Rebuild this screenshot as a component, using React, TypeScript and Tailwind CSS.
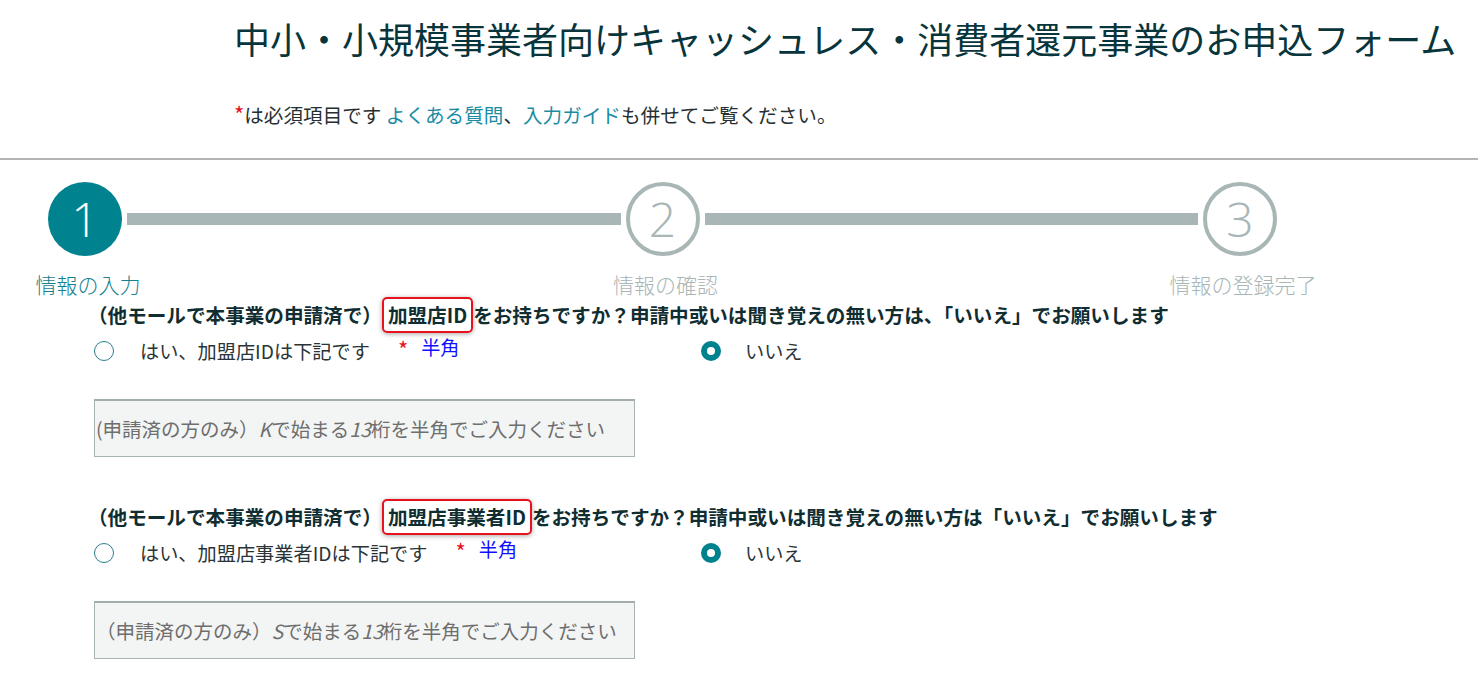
import React from "react";

function Step({ n, label, active }: { n: string; label: string; active?: boolean }) {
  return (
    <div className="flex w-[74px] shrink-0 flex-col items-center">
      <div
        className={
          active
            ? "flex h-[74px] w-[74px] items-center justify-center rounded-full bg-[#00828f] text-white"
            : "flex h-[74px] w-[74px] items-center justify-center rounded-full border-[4px] border-[#a9b6b6] bg-white text-[#a9b6b6]"
        }
      >
        <span className="font-['Open_Sans','Noto_Sans',sans-serif] text-[48px] font-light leading-none">{n}</span>
      </div>
      <div
        className={
          "mt-[16px] ml-[6px] whitespace-nowrap text-[21px] font-light leading-[24px] " +
          (active ? "text-[#13818f]" : "text-[#a9b6b6]")
        }
      >
        {label}
      </div>
    </div>
  );
}

function Bar() {
  return <div className="mx-[5px] mt-[31px] h-[12px] flex-1 bg-[#a8b6b6]" />;
}

function Radio({ checked }: { checked?: boolean }) {
  return checked ? (
    <span className="flex h-[20px] w-[20px] shrink-0 items-center justify-center rounded-full bg-[#00818e]">
      <span className="h-[8px] w-[8px] rounded-full bg-white" />
    </span>
  ) : (
    <span className="h-[20px] w-[20px] shrink-0 rounded-full border-[1.5px] border-[#2b7f8b] bg-white" />
  );
}

function Section({
  highlight,
  rest,
  yesLabel,
  placeholder,
}: {
  highlight: string;
  rest: string;
  yesLabel: string;
  placeholder: React.ReactNode;
}) {
  return (
    <div className="flex flex-col">
      <div className="flex h-[36px] items-center pl-[88px] text-[19.6px] font-bold leading-[24px] text-[#102d31]">
        <span>（他モールで本事業の申請済で）</span>
        <span className="flex h-[36px] items-center rounded-[5px] border-2 border-[#e8121e] px-[4px] shadow-[0_1px_5px_rgba(0,0,0,0.35)]">
          {highlight}
        </span>
        <span>{rest}</span>
      </div>
      <div className="mt-[6px] flex h-[24px] items-center pl-[94px] text-[19.2px] leading-[24px] text-[#2a3436]">
        <div className="flex w-[607px] items-center">
          <Radio />
          <span className="ml-[26px]">{yesLabel}</span>
          <span className="mb-[6px] ml-[28px] text-[22px] leading-[24px] text-[#e8121e]">*</span>
          <span className="mb-[8px] ml-[13px] text-[#1010ff]">半角</span>
        </div>
        <div className="flex items-center">
          <Radio checked />
          <span className="ml-[24px]">いいえ</span>
        </div>
      </div>
      <div className="ml-[94px] mt-[36px] flex h-[58px] w-[541px] items-center border border-t-2 border-[#a9b4b4] border-t-[#a3adad] bg-[#f3f5f5] pl-[1px] text-[19.5px] leading-[24px] text-[#6e6e6e]">
        {placeholder}
      </div>
    </div>
  );
}

export default function App() {
  return (
    <div className="min-h-[686px] w-full bg-white font-['Noto_Sans_CJK_JP','Noto_Sans',sans-serif]">
      <header className="pl-[234px] pt-[16px]">
        <h1 className="text-[36px] font-normal leading-[44px] text-[#08353c]">
          中小・小規模事業者向けキャッシュレス・消費者還元事業のお申込フォーム
        </h1>
        <p className="mt-[41px] text-[19.6px] leading-[28px] text-[#262f31]">
          <span className="text-[22px] leading-[20px] text-[#e8121e]">*</span>は必須項目です{" "}
          <a className="text-[#1a8ca3]">よくある質問</a>、<a className="text-[#1a8ca3]">入力ガイド</a>
          も併せてご覧ください。
        </p>
      </header>
      <div className="mt-[29px] h-[2px] w-full bg-[#b4b4b4]" />

      <div className="ml-[48px] mt-[22px] flex w-[1229px] items-start">
        <Step n="1" label="情報の入力" active />
        <Bar />
        <Step n="2" label="情報の確認" />
        <Bar />
        <Step n="3" label="情報の登録完了" />
      </div>

      <div className="mt-[1px] flex flex-col gap-[42px]">
        <Section
          highlight="加盟店ID"
          rest="をお持ちですか？申請中或いは聞き覚えの無い方は、「いいえ」でお願いします"
          yesLabel="はい、加盟店IDは下記です"
          placeholder={
            <span>
              (申請済の方のみ）<i>K</i>で始まる<i>13</i>桁を半角でご入力ください
            </span>
          }
        />
        <Section
          highlight="加盟店事業者ID"
          rest="をお持ちですか？申請中或いは聞き覚えの無い方は「いいえ」でお願いします"
          yesLabel="はい、加盟店事業者IDは下記です"
          placeholder={
            <span>
              （申請済の方のみ）<i>S</i>で始まる<i>13</i>桁を半角でご入力ください
            </span>
          }
        />
      </div>
    </div>
  );
}
